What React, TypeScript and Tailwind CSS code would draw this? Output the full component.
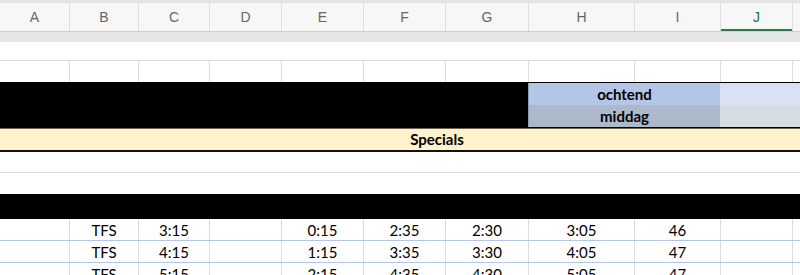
import React from "react";

const W = [
  "w-[69px]",
  "w-[69px]",
  "w-[71px]",
  "w-[72px]",
  "w-[82px]",
  "w-[82px]",
  "w-[83px]",
  "w-[106px]",
  "w-[86px]",
  "w-[72px]",
  "flex-1",
];
const LETTERS = ["A", "B", "C", "D", "E", "F", "G", "H", "I", "J", ""];

const cellFont = { fontFamily: "Lato, 'Open Sans', sans-serif" };

function Header() {
  return (
    <div className="flex h-[28px] shrink-0 bg-[#f7f7f7]" style={{ fontFamily: "'Liberation Sans', Arial, sans-serif" }}>
      {LETTERS.map((l, i) => (
        <div
          key={i}
          className={`${W[i]} shrink-0 relative flex items-center justify-center text-[14px] ${
            i > 0 ? "border-l border-[#dedede]" : ""
          } ${l === "J" ? "text-[#1f6f43]" : "text-[#666666]"}`}
        >
          {l}
          {l === "J" && <div className="absolute left-0 right-0 bottom-0 h-[2px] bg-[#2e7a4f]" />}
        </div>
      ))}
    </div>
  );
}

function GridRow({ values, border }: { values: string[]; border?: string }) {
  return (
    <div className={`flex h-[22px] shrink-0 ${border ?? ""}`} style={cellFont}>
      {W.map((w, i) => (
        <div
          key={i}
          className={`${w} shrink-0 flex items-center justify-center pt-[2px] text-[15px] text-black ${
            i > 0 ? "border-l border-[#dcdcdc]" : ""
          }`}
        >
          {values[i] ?? ""}
        </div>
      ))}
    </div>
  );
}

export default function App() {
  const data = [
    ["", "TFS", "3:15", "", "0:15", "2:35", "2:30", "3:05", "46", "", ""],
    ["", "TFS", "4:15", "", "1:15", "3:35", "3:30", "4:05", "47", "", ""],
    ["", "TFS", "5:15", "", "2:15", "4:35", "4:30", "5:05", "47", "", ""],
  ];
  return (
    <div className="w-[800px] h-[275px] overflow-hidden bg-white">
      <div className="h-[3px] bg-[#e4e4e4]" />
      <Header />
      <div className="h-px bg-[#cfcfcf]" />
      <div className="h-[10px] bg-[#e6e6e6]" />
      <div className="h-[18px] bg-white" />
      <div className="h-px bg-[#dcdcdc]" />
      <div className="flex h-[21px]">
        {W.map((w, i) => (
          <div key={i} className={`${w} shrink-0 ${i > 0 ? "border-l border-[#dcdcdc]" : ""}`} />
        ))}
      </div>
      {/* black block with ochtend / middag */}
      <div className="flex h-[46px] bg-black py-px" style={cellFont}>
        <div className="w-[528px] shrink-0" />
        <div className="w-[192px] shrink-0 flex flex-col border-l border-[#8d9ab3]">
          <div className="h-[22px] bg-[#b4c6e7] flex items-center justify-center text-[15px] font-bold text-black">
            ochtend
          </div>
          <div className="h-[22px] bg-[#acb9ca] flex items-center justify-center text-[15px] font-bold text-black">
            middag
          </div>
        </div>
        <div className="flex-1 flex flex-col">
          <div className="h-[22px] bg-[#d9e1f2]" />
          <div className="h-[22px] bg-[#d6dce4]" />
        </div>
      </div>
      {/* Specials */}
      <div className="h-px bg-[#6d6650]" />
      <div
        className="h-[21px] bg-[#fff2cc] flex items-center justify-center pl-[74px] text-[15px] font-bold text-black"
        style={cellFont}
      >
        Specials
      </div>
      <div className="h-[2px] bg-[#111111]" />
      <div className="h-[20px] bg-white" />
      <div className="h-px bg-[#dcdcdc]" />
      <div className="h-[21px] bg-white" />
      <div className="h-[25px] bg-black" />
      {data.map((r, i) => (
        <GridRow key={i} values={r} border="border-b border-[#b4c6e7]" />
      ))}
    </div>
  );
}
